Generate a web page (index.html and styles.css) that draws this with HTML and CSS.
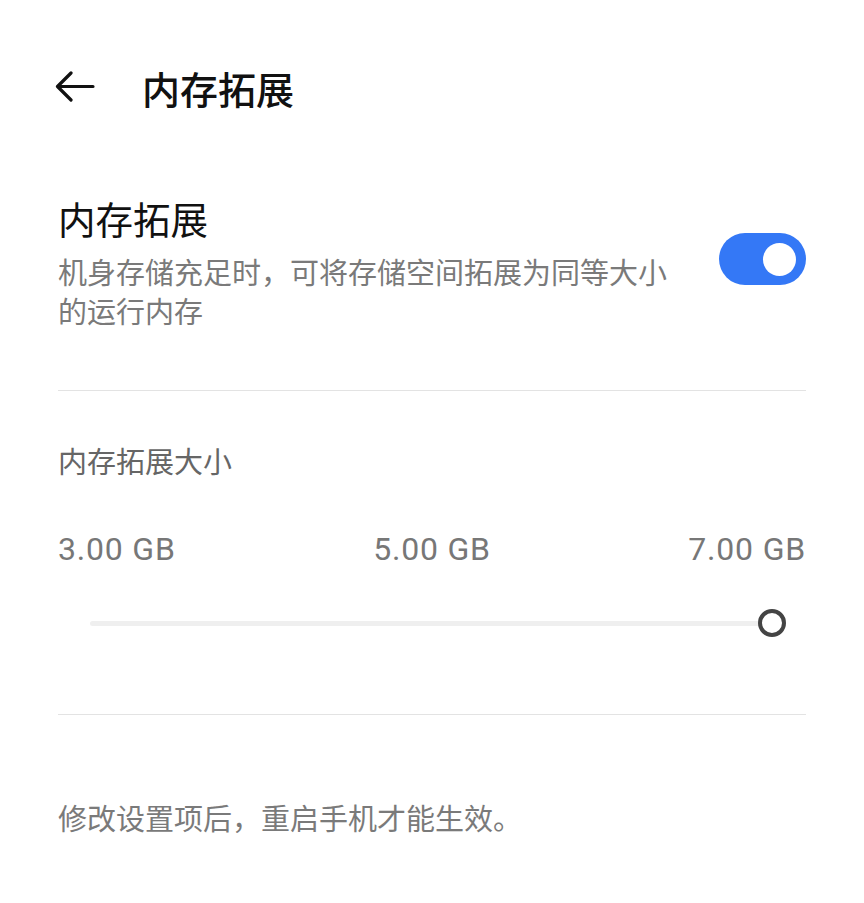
FILE: index.html
```html
<!DOCTYPE html>
<html lang="zh-CN">
<head>
<meta charset="utf-8">
<link rel="stylesheet" href="styles.css">
</head>
<body>
<div class="page">
  <header class="header">
    <svg class="back" width="40" height="32" viewBox="0 0 40 32">
      <path d="M38 15.5 H3 M16 2 L2.5 15.5 L16 29" fill="none" stroke="#111" stroke-width="3.2" stroke-linecap="round" stroke-linejoin="round"/>
    </svg>
    <h1 class="header-title">内存拓展</h1>
  </header>

  <section class="row">
    <div class="row-text">
      <div class="row-title">内存拓展</div>
      <div class="row-sub">机身存储充足时，可将存储空间拓展为同等大小的运行内存</div>
    </div>
    <div class="toggle"><div class="toggle-knob"></div></div>
  </section>

  <div class="divider"></div>

  <div class="size-label">内存拓展大小</div>
  <div class="ticks">
    <span>3.00 GB</span>
    <span>5.00 GB</span>
    <span>7.00 GB</span>
  </div>
  <div class="slider">
    <div class="track"></div>
    <div class="thumb"></div>
  </div>

  <div class="divider divider-2"></div>

  <p class="note">修改设置项后，重启手机才能生效。</p>
</div>
</body>
</html>
```

FILE: styles.css
```css
html, body {
  margin: 0;
  padding: 0;
  background: #ffffff;
}
body {
  font-family: "Noto Sans CJK SC", "Noto Sans", Roboto, sans-serif;
  color: #111;
}
.page {
  padding: 0 58px;
}
.header {
  height: 176px;
  display: flex;
  align-items: center;
}
.back {
  margin-left: -3px;
  margin-top: -2px;
  flex: none;
}
.header-title {
  margin: 0 0 0 47px;
  font-size: 38px;
  font-weight: 500;
  line-height: 48px;
  color: #111;
}
.row {
  margin-top: 18px;
  display: flex;
  justify-content: space-between;
  align-items: flex-start;
}
.row-text {
  max-width: 625px;
}
.row-title {
  font-size: 37.5px;
  line-height: 48px;
  color: #111;
}
.row-sub {
  margin-top: 10px;
  font-size: 29px;
  line-height: 39px;
  color: #7a7a7a;
}
.toggle {
  margin-top: 39px;
  width: 87px;
  height: 52px;
  border-radius: 26px;
  background: #3478f6;
  display: flex;
  align-items: center;
  justify-content: flex-end;
  padding-right: 10px;
  box-sizing: border-box;
  flex: none;
}
.toggle-knob {
  width: 33px;
  height: 33px;
  border-radius: 50%;
  background: #ffffff;
}
.divider {
  margin-top: 60px;
  height: 1px;
  background: #e3e3e3;
}
.size-label {
  margin-top: 49px;
  font-size: 29px;
  line-height: 40px;
  color: #666;
}
.ticks {
  margin-top: 49px;
  display: flex;
  justify-content: space-between;
  font-family: Roboto, "Noto Sans", sans-serif;
  font-size: 32px;
  line-height: 40px;
  letter-spacing: 0.8px;
  color: #777;
}
.slider {
  margin-top: 40px;
  height: 28px;
  display: flex;
  align-items: center;
  padding: 0 20px 0 32px;
}
.track {
  flex: 1;
  height: 5px;
  border-radius: 3px;
  background: #efefef;
}
.thumb {
  width: 28px;
  height: 28px;
  box-sizing: border-box;
  border: 4.5px solid #444;
  border-radius: 50%;
  background: #fff;
  flex: none;
  margin-left: -4px;
}
.divider-2 {
  margin-top: 77px;
}
.note {
  margin: 82px 0 0;
  font-size: 29px;
  line-height: 40px;
  color: #7a7a7a;
}
```
